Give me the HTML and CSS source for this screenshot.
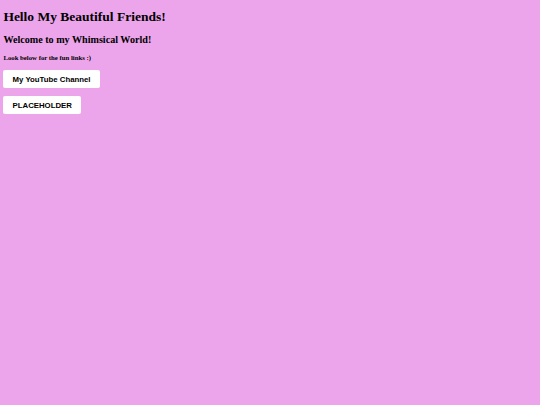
FILE: index.html
```html
<!DOCTYPE html>
<html lang="en">
<head>
<meta charset="utf-8">
<title>Whimsical World</title>
<link rel="stylesheet" href="styles.css">
</head>
<body>
<h1 class="title">Hello My Beautiful Friends!</h1>
<h2 class="subtitle">Welcome to my Whimsical World!</h2>
<h4 class="note">Look below for the fun links :)</h4>
<div class="links">
  <a class="btn" href="#">My YouTube Channel</a>
  <a class="btn" href="#">PLACEHOLDER</a>
</div>
</body>
</html>
```
FILE: styles.css
```css
html, body {
  background: #eca4ea;
}
body {
  margin: 3.375px;
  font-family: "Liberation Serif", "Times New Roman", serif;
  color: #000;
}
.title {
  font-size: 13.5px;
  margin: 6px 0 8.6px;
  font-weight: bold;
}
.subtitle {
  font-size: 10.125px;
  margin: 8.4px 0;
  font-weight: bold;
}
.note {
  font-size: 6.75px;
  margin: 8.98px 0;
  font-weight: bold;
}
.links {
  display: flex;
  flex-direction: column;
  align-items: flex-start;
  gap: 8px;
}
.btn {
  display: inline-block;
  background: #fff;
  color: #000;
  text-decoration: none;
  font-family: "Liberation Sans", Arial, sans-serif;
  font-weight: bold;
  font-size: 7.8px;
  line-height: 9px;
  padding: 4.6px 9.2px;
  border-radius: 2px;
}
```
